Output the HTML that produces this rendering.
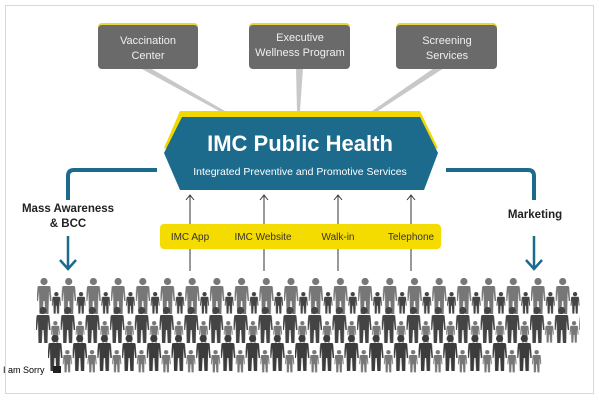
<!DOCTYPE html>
<html><head><meta charset="utf-8"><style>
html,body{margin:0;padding:0;background:#fff;width:599px;height:400px;overflow:hidden}
svg{display:block}
text{font-family:"Liberation Sans",sans-serif}
</style></head><body>
<svg width="599" height="400" viewBox="0 0 599 400" xmlns="http://www.w3.org/2000/svg">
<defs>
<path id="ad" d="M-6.5,9.5 Q-6.5,8 -5,8 L5,8 Q6.5,8 6.5,9.5 L7.5,23 L6,23 L5,13 L4.5,36 L1.2,36 L0.6,23 L-0.6,23 L-1.2,36 L-4.5,36 L-5,13 L-6,23 L-7.5,23 Z"/>
<pattern id="pb" patternUnits="userSpaceOnUse" x="37" y="278" width="24.7" height="40">
<g fill="#777"><circle cx="7" cy="3.5" r="3.6"/><use href="#ad" x="7" y="0"/></g>
<g fill="#444" transform="translate(19.35,14) scale(0.6)"><circle cx="0" cy="3.5" r="3.6"/><use href="#ad"/></g>
</pattern>
<pattern id="pm" patternUnits="userSpaceOnUse" x="36" y="307" width="24.7" height="40">
<g fill="#444"><circle cx="7" cy="3.5" r="3.6"/><use href="#ad" x="7" y="0"/></g>
<g fill="#777" transform="translate(19.35,14) scale(0.6)"><circle cx="0" cy="3.5" r="3.6"/><use href="#ad"/></g>
</pattern>
<pattern id="pf" patternUnits="userSpaceOnUse" x="48" y="335" width="24.7" height="40">
<g fill="#3c3c3c"><circle cx="7" cy="3.5" r="3.6"/><use href="#ad" x="7" y="0"/></g>
<g fill="#777" transform="translate(19.35,15) scale(0.62)"><circle cx="0" cy="3.5" r="3.6"/><use href="#ad"/></g>
</pattern>
</defs>
<rect x="5.5" y="5.5" width="588" height="388" fill="#fff" stroke="#d8d8d8"/>
<polygon points="140,68 150,68 225,111 219,111" fill="#c8c8c8"/>
<polygon points="296,68 303,68 300,111 297,111" fill="#c8c8c8"/>
<polygon points="434,68 444,68 378,111 372,111" fill="#c8c8c8"/>
<g>
<rect x="98" y="23" width="100" height="46" rx="4" fill="#e8d640"/>
<rect x="98" y="25" width="100" height="44" rx="4" fill="#6a6a6a"/>
<rect x="249" y="23" width="101" height="46" rx="4" fill="#e8d640"/>
<rect x="249" y="25" width="101" height="44" rx="4" fill="#6a6a6a"/>
<rect x="396" y="23" width="101" height="46" rx="4" fill="#e8d640"/>
<rect x="396" y="25" width="101" height="44" rx="4" fill="#6a6a6a"/>
<g fill="#f0f0f0" font-size="11" text-anchor="middle">
<text x="148" y="44">Vaccination</text><text x="148" y="59">Center</text>
<text x="300" y="41">Executive</text><text x="300" y="56">Wellness Program</text>
<text x="447" y="44">Screening</text><text x="447" y="59">Services</text>
</g></g>
<polygon points="180,111 420,111 438,148 422,153 178,153 164,148" fill="#f0d800"/>
<polygon points="182,117 420,117 438,153 424,190 180,190 164,153" fill="#1c6a8c"/>
<text x="300" y="151" text-anchor="middle" font-size="22" font-weight="bold" fill="#fff">IMC Public Health</text>
<text x="300" y="175" text-anchor="middle" font-size="10.5" fill="#fff">Integrated Preventive and Promotive Services</text>
<path d="M157,170 L74,170 Q68,170 68,176 L68,200" fill="none" stroke="#1c6a8c" stroke-width="4"/>
<path d="M446,170 L528,170 Q534,170 534,176 L534,200" fill="none" stroke="#1c6a8c" stroke-width="4"/>
<g stroke="#1c6a8c" stroke-width="2.5" fill="none">
<path d="M68,236 L68,269 M60,260 L68,269 L76,260"/>
<path d="M534,236 L534,269 M526,260 L534,269 L542,260"/>
</g>
<g font-size="11.5" font-weight="bold" fill="#222" text-anchor="middle">
<text x="68" y="212">Mass Awareness</text><text x="68" y="227">&amp; BCC</text>
<text x="535" y="218">Marketing</text>
</g>
<g stroke="#333" stroke-width="1" fill="none">
<path d="M190,195 L190,271 M186,200 L190,195 L194,200"/>
<path d="M264,195 L264,271 M260,200 L264,195 L268,200"/>
<path d="M338,195 L338,271 M334,200 L338,195 L342,200"/>
<path d="M411,195 L411,271 M407,200 L411,195 L415,200"/>
</g>
<rect x="160" y="224" width="281" height="25" rx="4" fill="#f5dc00"/>
<g font-size="10" fill="#333" text-anchor="middle">
<text x="190" y="240">IMC App</text><text x="263" y="240">IMC Website</text>
<text x="338" y="240">Walk-in</text><text x="411" y="240">Telephone</text>
</g>
<rect x="37" y="278" width="543" height="38" fill="url(#pb)"/>
<rect x="36" y="307" width="544" height="38" fill="url(#pm)"/>
<rect x="48" y="335" width="494" height="40" fill="url(#pf)"/>
<text x="3" y="373" font-size="9" fill="#000">I am Sorry</text>
<rect x="53" y="366" width="8" height="7" fill="#222"/>
</svg>
</body></html>
